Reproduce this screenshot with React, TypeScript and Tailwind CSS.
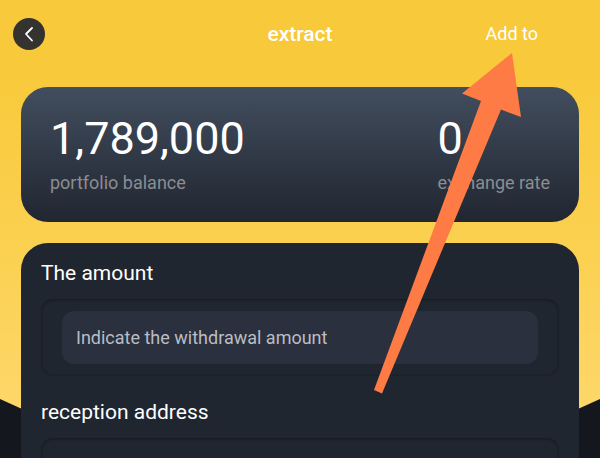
import React from "react";

function BackButton() {
  return (
    <button
      type="button"
      aria-label="Back"
      className="flex size-8 items-center justify-center rounded-full bg-[#343330] text-white"
    >
      <svg viewBox="0 0 32 32" className="size-8" fill="none" stroke="currentColor" strokeWidth="1.8" strokeLinecap="round" strokeLinejoin="round" aria-hidden="true">
        <path d="M19 10 L13 16 L19 22.500" />
      </svg>
    </button>
  );
}

function Stat({ value, label }: { value: string; label: string }) {
  return (
    <div className="flex flex-col-reverse gap-1">
      <dt className="text-lg leading-7 text-[#8b8d92]">{label}</dt>
      <dd className="text-[45px] leading-[52px] text-white">{value}</dd>
    </div>
  );
}

function Field({ id, label, children }: { id: string; label: string; children: React.ReactNode }) {
  return (
    <div>
      <label htmlFor={id} className="block text-[21px] leading-7 text-white">
        {label}
      </label>
      <div className="mt-3 rounded-xl shadow-[inset_0_1px_3px_#161b22,inset_0_0_2px_#191e26]">{children}</div>
    </div>
  );
}

function Backdrop() {
  return (
    <svg viewBox="0 0 600 458" preserveAspectRatio="none" className="col-start-1 row-start-1 h-screen w-full" aria-hidden="true">
      <defs>
        <linearGradient id="glow" x1="0" y1="0" x2="0" y2="1">
          <stop offset="0.15" stopColor="#f8c93a" />
          <stop offset="0.55" stopColor="#fbd152" />
          <stop offset="1" stopColor="#fed973" />
        </linearGradient>
      </defs>
      <path d="M0 0H600V399Q300 540 0 399Z" fill="url(#glow)" />
    </svg>
  );
}

function Arrow() {
  return (
    <svg viewBox="0 0 600 458" className="pointer-events-none absolute inset-0 h-full w-full" aria-hidden="true">
      <path d="M512 53L521 117L501 109.500L382 393.500L374 390L481 101L462 93.500Z" fill="#ff7b45" />
    </svg>
  );
}

export default function App() {
  return (
    <main className="relative grid h-screen grid-cols-1 overflow-hidden bg-[#14171e] font-['Roboto',sans-serif]">
      <Backdrop />
      <div className="col-start-1 row-start-1">
        <header className="grid h-[87px] grid-cols-[1fr_auto_1fr] items-start pt-[18px] pr-[62px] pl-[13px]">
          <BackButton />
          <h1 className="ml-[49px] text-[21px] leading-8 font-medium text-white">extract</h1>
          <button type="button" className="justify-self-end text-lg leading-8 text-white">
            Add to
          </button>
        </header>
        <div className="flex flex-col gap-[21px] px-[21px]">
          <dl className="flex justify-between rounded-[27px] bg-linear-to-b from-[#424e5e] to-[#212631] px-[29px] pt-[26px] pb-[25px]">
            <Stat value="1,789,000" label="portfolio balance" />
            <Stat value="0" label="exchange rate" />
          </dl>
          <form className="flex flex-col gap-[22px] rounded-t-[27px] bg-[#20262f] px-5 pt-4 pb-5">
            <Field id="amount" label="The amount">
              <div className="px-[21px] py-3">
                <input
                  id="amount"
                  type="text"
                  placeholder="Indicate the withdrawal amount"
                  className="block h-[53px] w-full rounded-xl bg-[#2a303d] px-[14px] text-lg text-white outline-none placeholder:text-[#babdc4]"
                />
              </div>
            </Field>
            <Field id="address" label="reception address">
              <input
                id="address"
                type="text"
                className="block h-20 w-full bg-transparent px-5 text-lg text-white outline-none"
              />
            </Field>
          </form>
        </div>
      </div>
      <Arrow />
    </main>
  );
}
